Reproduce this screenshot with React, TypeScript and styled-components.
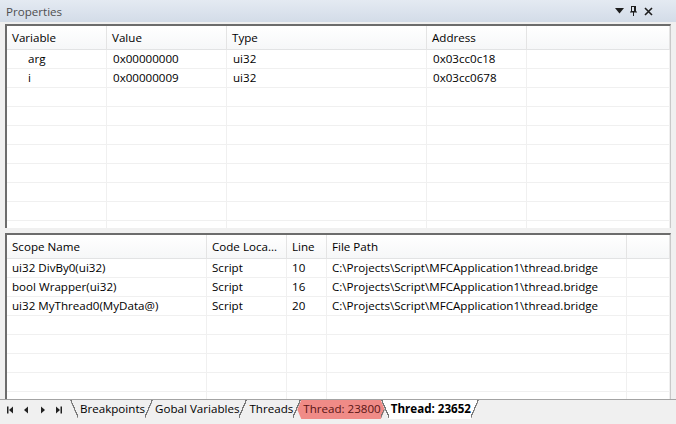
import React from "react";
import styled, { createGlobalStyle } from "styled-components";

const GlobalStyle = createGlobalStyle`
  html, body {
    margin: 0;
    padding: 0;
    background: #f0f0f0;
  }
  body {
    font-family: "Open Sans", "Noto Sans", "DejaVu Sans", sans-serif;
    font-size: 11.6px;
    color: #000;
  }
`;

const Window = styled.div`
  width: 676px;
  height: 424px;
  display: flex;
  flex-direction: column;
  overflow: hidden;
  background: #f0f0f0;
`;

const TitleBar = styled.div`
  height: 22px;
  flex: none;
  display: flex;
  align-items: center;
  justify-content: space-between;
  padding: 0 23px 0 6px;
  background: linear-gradient(#e4eaf2, #d3dce8);
  color: #4e4e4e;
  box-sizing: border-box;
`;

const TitleButtons = styled.div`
  display: flex;
  align-items: center;
  gap: 6px;
`;

const Body = styled.div`
  flex: none;
  display: flex;
  flex-direction: column;
  gap: 5px;
  padding: 2px 5px 0 5px;
`;

const Pane = styled.div<{ $h: number }>`
  height: ${(p) => p.$h}px;
  flex: none;
  box-sizing: border-box;
  background: #fff;
  border-top: 2px solid #6c6c6c;
  border-left: 2px solid #6c6c6c;
  border-right: 1px solid #c9c9c9;
  overflow: hidden;
`;

const Grid = styled.div<{ $cols: string }>`
  display: grid;
  grid-template-columns: ${(p) => p.$cols} 1fr;
`;

const HeadCell = styled.div`
  height: 24px;
  line-height: 23px;
  box-sizing: border-box;
  padding-left: 5px;
  background: linear-gradient(#ffffff, #f6f7f8);
  border-right: 1px solid #e4e4e4;
  border-bottom: 1px solid #e2e3e4;
  white-space: nowrap;
  overflow: hidden;
`;

const Cell = styled.div<{ $indent?: number }>`
  height: 19px;
  line-height: 18px;
  box-sizing: border-box;
  padding-left: ${(p) => p.$indent ?? 5}px;
  border-right: 1px solid #f0f0f0;
  border-bottom: 1px solid #f0f0f0;
  white-space: nowrap;
  overflow: hidden;
`;

const Strip = styled.div`
  flex: none;
  height: 25px;
  box-sizing: border-box;
  border-top: 1px solid #a3a3a3;
  display: flex;
  align-items: flex-start;
  background: #f0f0f0;
`;

const NavGroup = styled.div`
  width: 70px;
  height: 19px;
  flex: none;
  display: flex;
  align-items: center;
  padding-left: 2px;
  box-sizing: border-box;
`;

const NavButton = styled.div`
  width: 16px;
  display: flex;
  justify-content: center;
  align-items: center;
`;

const edgeColor = "#757575";

const Tab = styled.div<{ $face: string; $left?: boolean; $z: number; $bold?: boolean; $ink?: string; $first?: boolean }>`
  position: relative;
  z-index: ${(p) => p.$z};
  height: 19px;
  line-height: 18px;
  padding: 0 8px 0 10px;
  margin-left: ${(p) => (p.$first ? 0 : -8)}px;
  flex: none;
  white-space: nowrap;
  color: ${(p) => p.$ink ?? "#000"};
  font-weight: ${(p) => (p.$bold ? 700 : 400)};
  clip-path: polygon(0 0, 100% 0, calc(100% - 8px) 100%, 8px 100%);
  background:
    linear-gradient(to bottom right, transparent calc(50% - 1.3px), ${edgeColor} calc(50% - 1.3px), ${edgeColor} 50%, transparent 50%) right top / 8px 100% no-repeat,
    ${(p) =>
      p.$left
        ? `linear-gradient(to top right, transparent 50%, ${edgeColor} 50%, ${edgeColor} calc(50% + 1.3px), transparent calc(50% + 1.3px)) left top / 8px 100% no-repeat,`
        : ""}
    ${(p) => p.$face};
`;

const upperCols = "100px 120px 200px 100px";
const lowerCols = "200px 80px 40px 300px";

const variables = [
  ["arg", "0x00000000", "ui32", "0x03cc0c18"],
  ["i", "0x00000009", "ui32", "0x03cc0678"],
];

const frames = [
  ["ui32 DivBy0(ui32)", "Script", "10", "C:\\Projects\\Script\\MFCApplication1\\thread.bridge"],
  ["bool Wrapper(ui32)", "Script", "16", "C:\\Projects\\Script\\MFCApplication1\\thread.bridge"],
  ["ui32 MyThread0(MyData@)", "Script", "20", "C:\\Projects\\Script\\MFCApplication1\\thread.bridge"],
];

const padRows = (rows: string[][], total: number, width: number) => {
  const out = rows.slice();
  while (out.length < total) out.push(Array(width).fill(""));
  return out;
};

const TriangleDown = () => (
  <svg width="9" height="6" viewBox="0 0 9 6">
    <polygon points="0,0 9,0 4.5,5.5" fill="#1e1e1e" />
  </svg>
);

const PinIcon = () => (
  <svg width="8" height="10" viewBox="0 0 8 10">
    <rect x="1.5" y="0.5" width="4" height="5" fill="none" stroke="#1e1e1e" />
    <rect x="4" y="0.5" width="1.5" height="5" fill="#1e1e1e" />
    <line x1="0" y1="6" x2="7" y2="6" stroke="#1e1e1e" />
    <line x1="3.5" y1="6" x2="3.5" y2="10" stroke="#1e1e1e" />
  </svg>
);

const CloseIcon = () => (
  <svg width="9" height="9" viewBox="0 0 9 9">
    <path d="M1 1 L8 8 M8 1 L1 8" stroke="#1e1e1e" strokeWidth="1.6" />
  </svg>
);

const NavIcon = ({ kind }: { kind: "first" | "prev" | "next" | "last" }) => (
  <svg width="7" height="8" viewBox="0 0 7 8">
    {kind === "first" && (
      <>
        <rect x="0" y="0.5" width="1.5" height="7" fill="#222" />
        <polygon points="6,0.5 6,7.5 2,4" fill="#222" />
      </>
    )}
    {kind === "prev" && <polygon points="5,0.5 5,7.5 1,4" fill="#222" />}
    {kind === "next" && <polygon points="2,0.5 2,7.5 6,4" fill="#222" />}
    {kind === "last" && (
      <>
        <polygon points="1,0.5 1,7.5 5,4" fill="#222" />
        <rect x="5.5" y="0.5" width="1.5" height="7" fill="#222" />
      </>
    )}
  </svg>
);

const App = () => {
  return (
    <Window>
      <GlobalStyle />
      <TitleBar>
        <span>Properties</span>
        <TitleButtons>
          <TriangleDown />
          <PinIcon />
          <CloseIcon />
        </TitleButtons>
      </TitleBar>

      <Body>
        <Pane $h={204}>
          <Grid $cols={upperCols}>
            {["Variable", "Value", "Type", "Address", ""].map((h, i) => (
              <HeadCell key={i}>{h}</HeadCell>
            ))}
            {padRows(variables, 10, 4).map((row, r) =>
              [...row, ""].map((v, c) => (
                <Cell key={`${r}-${c}`} $indent={c === 0 ? 21 : 6}>
                  {v}
                </Cell>
              ))
            )}
          </Grid>
        </Pane>

        <Pane $h={166}>
          <Grid $cols={lowerCols}>
            {["Scope Name", "Code Loca...", "Line", "File Path", ""].map((h, i) => (
              <HeadCell key={i}>{h}</HeadCell>
            ))}
            {padRows(frames, 8, 4).map((row, r) =>
              [...row, ""].map((v, c) => (
                <Cell key={`${r}-${c}`}>{v}</Cell>
              ))
            )}
          </Grid>
        </Pane>
      </Body>

      <Strip>
        <NavGroup>
          <NavButton><NavIcon kind="first" /></NavButton>
          <NavButton><NavIcon kind="prev" /></NavButton>
          <NavButton><NavIcon kind="next" /></NavButton>
          <NavButton><NavIcon kind="last" /></NavButton>
        </NavGroup>
        <Tab $first $left $face="#f0f0f0" $z={6}>Breakpoints</Tab>
        <Tab $face="#f0f0f0" $z={5}>Gobal Variables</Tab>
        <Tab $face="#f0f0f0" $z={4}>Threads</Tab>
        <Tab $face="#f08b87" $ink="#5a1414" $z={3}>Thread: 23800</Tab>
        <Tab $left $bold $face="#ffffff" $z={10}>Thread: 23652</Tab>
      </Strip>
    </Window>
  );
};

export default App;
